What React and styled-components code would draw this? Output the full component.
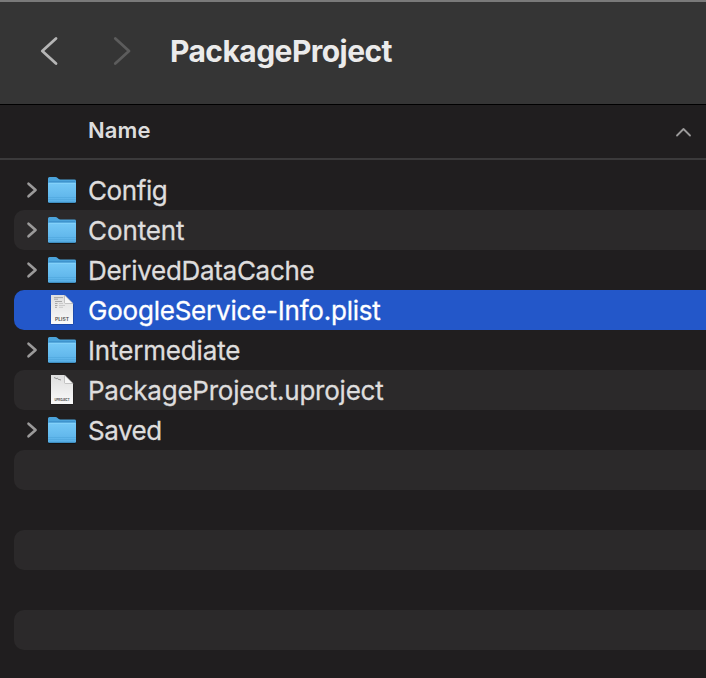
import styled, { createGlobalStyle } from "styled-components";

const GlobalStyle = createGlobalStyle`
  body {
    margin: 0;
    background: #201e1f;
    font-family: Inter, "Liberation Sans", sans-serif;
    -webkit-font-smoothing: antialiased;
  }
`;
const Window = styled.div`
  height: 678px;
  overflow: hidden;
  background: #201e1f;
  box-sizing: border-box;
  border-top: 2px solid #7a7a7a;
`;
const Toolbar = styled.header`
  display: flex;
  align-items: center;
  height: 102px;
  box-sizing: border-box;
  padding: 0 0 4px 39px;
  background: #353535;
`;
const NavButton = styled.button`
  display: flex;
  padding: 0;
  margin-right: ${(props) => (props.$last ? "38px" : "53px")};
  border: none;
  background: none;
  color: ${(props) => (props.$dimmed ? "#5c5c5c" : "#b5b5b5")};
`;
const Title = styled.h1`
  margin: 0;
  font-size: 30px;
  line-height: 40px;
  font-weight: 700;
  letter-spacing: -0.55px;
  color: #ebebeb;
  white-space: nowrap;
`;
const ColumnHeader = styled.div`
  display: flex;
  align-items: center;
  justify-content: space-between;
  height: 56px;
  box-sizing: border-box;
  padding: 0 14px 3px 88px;
  border-top: 1px solid #000;
  border-bottom: 2px solid #3b3a3b;
`;
const ColumnName = styled.span`
  font-size: 22px;
  line-height: 30px;
  font-weight: 600;
  letter-spacing: 0.1px;
  color: #dddddd;
`;
const SortArrow = styled.span`
  display: flex;
  padding-top: 3px;
  color: #9b9a9a;
`;
const FileList = styled.ul`
  list-style: none;
  margin: 0;
  padding: 10px 0 0 14px;
`;
const Row = styled.li`
  display: flex;
  align-items: center;
  height: 40px;
  border-radius: 10px 0 0 10px;
  color: ${(props) => (props.$selected ? "#ffffff" : "#dedddd")};
  background: ${(props) =>
    props.$selected ? "#2357c9" : props.$striped ? "#2b292a" : "transparent"};
`;
const Disclosure = styled.span`
  display: flex;
  width: 20px;
  padding: 0 0 1px 12px;
  color: #9b9a9a;
`;
const IconSlot = styled.span`
  display: flex;
  width: 32px;
  margin-right: 10px;
`;
const FileName = styled.span`
  font-size: 26px;
  line-height: 40px;
  padding-top: 2px;
  letter-spacing: ${(props) => props.$tracking}px;
  -webkit-text-stroke: 0.3px currentColor;
  white-space: nowrap;
`;

function Chevron({ width, height, points, stroke }) {
  return (
    <svg width={width} height={height} viewBox={`0 0 ${width} ${height}`}>
      <polyline
        points={points}
        fill="none"
        stroke="currentColor"
        strokeWidth={stroke}
        strokeLinecap="round"
        strokeLinejoin="round"
      />
    </svg>
  );
}

function FolderIcon() {
  return (
    <svg width="32" height="32" viewBox="0 0 32 32">
      <defs>
        <linearGradient id="folder" x1="0" y1="0" x2="0" y2="1">
          <stop offset="0" stopColor="#76c9f7" />
          <stop offset="1" stopColor="#59b0e7" />
        </linearGradient>
      </defs>
      <rect x="2.5" y="28" width="27" height="1.8" rx="0.9" fill="#111111" />
      <path
        d="M2 4.5Q2 3 3.5 3H9.5Q10.7 3 11.6 3.9L12.4 4.8Q13.2 5.6 14.4 5.6H28.5Q30 5.6 30 7V12H2Z"
        fill="#4ba4dc"
      />
      <path d="M3 8H29" stroke="#3c8fc8" strokeWidth="1.4" />
      <path
        d="M2 9.8Q2 8.8 3 8.8H29Q30 8.8 30 9.8V27.5Q30 28.8 28.7 28.8H3.3Q2 28.8 2 27.5Z"
        fill="url(#folder)"
      />
      <path d="M2.5 9.3H29.5" stroke="#8ad5fb" strokeWidth="0.8" />
      <path d="M2 23.5H30M2 25.5H30" stroke="#4ba2d8" strokeWidth="0.5" />
      <path d="M2.8 28.3H29.2" stroke="#3f91c6" strokeWidth="1" />
    </svg>
  );
}

function DocumentIcon({ label, plist }) {
  return (
    <svg width="32" height="32" viewBox="0 0 32 32">
      <defs>
        <linearGradient id="paper" x1="0" y1="0" x2="0" y2="1">
          <stop offset="0" stopColor="#dedede" />
          <stop offset="1" stopColor="#fafafa" />
        </linearGradient>
      </defs>
      <rect x="4.7" y="10" width="22.8" height="20.6" rx="1" fill="#000" opacity="0.3" />
      <path d="M5 1H18.5L27 9.5V30H5Z" fill="url(#paper)" />
      {plist ? (
        <g fill="none" strokeWidth="0.9">
          <path
            d="M8 3.6H17M8 5.2H12M9 7.5H16M9 9.5H11.5M9 11.5H11.5M9 13.3H11"
            stroke="#a0a0a0"
          />
          <path d="M13 9.5H17M13 11.5H19M13 13.3H17" stroke="#c6c6c6" />
        </g>
      ) : (
        <path
          d="M8 3.5L10 4.4M10 4.7L12 4.2M12 5.2L15 6"
          fill="none"
          stroke="#8a8a8a"
          strokeWidth="0.9"
        />
      )}
      <path d="M18.5 1V8.5Q18.5 9.5 19.5 9.5H27Z" fill="#f7f7f7" stroke="#a5a5a5" strokeWidth="0.6" />
      <text
        x="16"
        y={plist ? 26.9 : 26.9}
        textAnchor="middle"
        textLength={plist ? 14 : 15}
        lengthAdjust="spacingAndGlyphs"
        fontSize={plist ? 5.3 : 3.2}
        fontWeight={plist ? 600 : 700}
        fill="#4b4b4b"
      >
        {label}
      </text>
    </svg>
  );
}

const rows = [
  { name: "Config", tracking: -0.4, folder: true },
  { name: "Content", tracking: -0.1, folder: true },
  { name: "DerivedDataCache", tracking: -0.3, folder: true },
  { name: "GoogleService-Info.plist", tracking: -0.22, label: "PLIST", selected: true },
  { name: "Intermediate", tracking: -0.15, folder: true },
  { name: "PackageProject.uproject", tracking: -0.24, label: "UPROJECT" },
  { name: "Saved", tracking: -0.5, folder: true },
  {},
  {},
  {},
  {},
  {},
  {},
];

function App() {
  return (
    <>
      <GlobalStyle />
      <Window>
        <Toolbar>
          <NavButton aria-label="Back">
            <Chevron width={20} height={30} points="17,2.5 3.3,15 17,27.5" stroke={2.8} />
          </NavButton>
          <NavButton aria-label="Forward" $dimmed $last>
            <Chevron width={20} height={30} points="3.3,2.5 17,15 3.3,27.5" stroke={2.8} />
          </NavButton>
          <Title>PackageProject</Title>
        </Toolbar>
        <ColumnHeader>
          <ColumnName>Name</ColumnName>
          <SortArrow>
            <Chevron width={17} height={10} points="2,8.5 8.5,2 15,8.5" stroke={1.8} />
          </SortArrow>
        </ColumnHeader>
        <FileList>
          {rows.map((row, i) => (
            <Row key={i} $striped={i % 2 === 1} $selected={row.selected}>
              {row.name && (
                <>
                  <Disclosure>
                    {row.folder && (
                      <Chevron width={12} height={18} points="2.5,2.7 9.6,9 2.5,15.3" stroke={2.6} />
                    )}
                  </Disclosure>
                  <IconSlot>
                    {row.folder ? (
                      <FolderIcon />
                    ) : (
                      <DocumentIcon label={row.label} plist={row.selected} />
                    )}
                  </IconSlot>
                  <FileName $tracking={row.tracking}>{row.name}</FileName>
                </>
              )}
            </Row>
          ))}
        </FileList>
      </Window>
    </>
  );
}

export default App;
